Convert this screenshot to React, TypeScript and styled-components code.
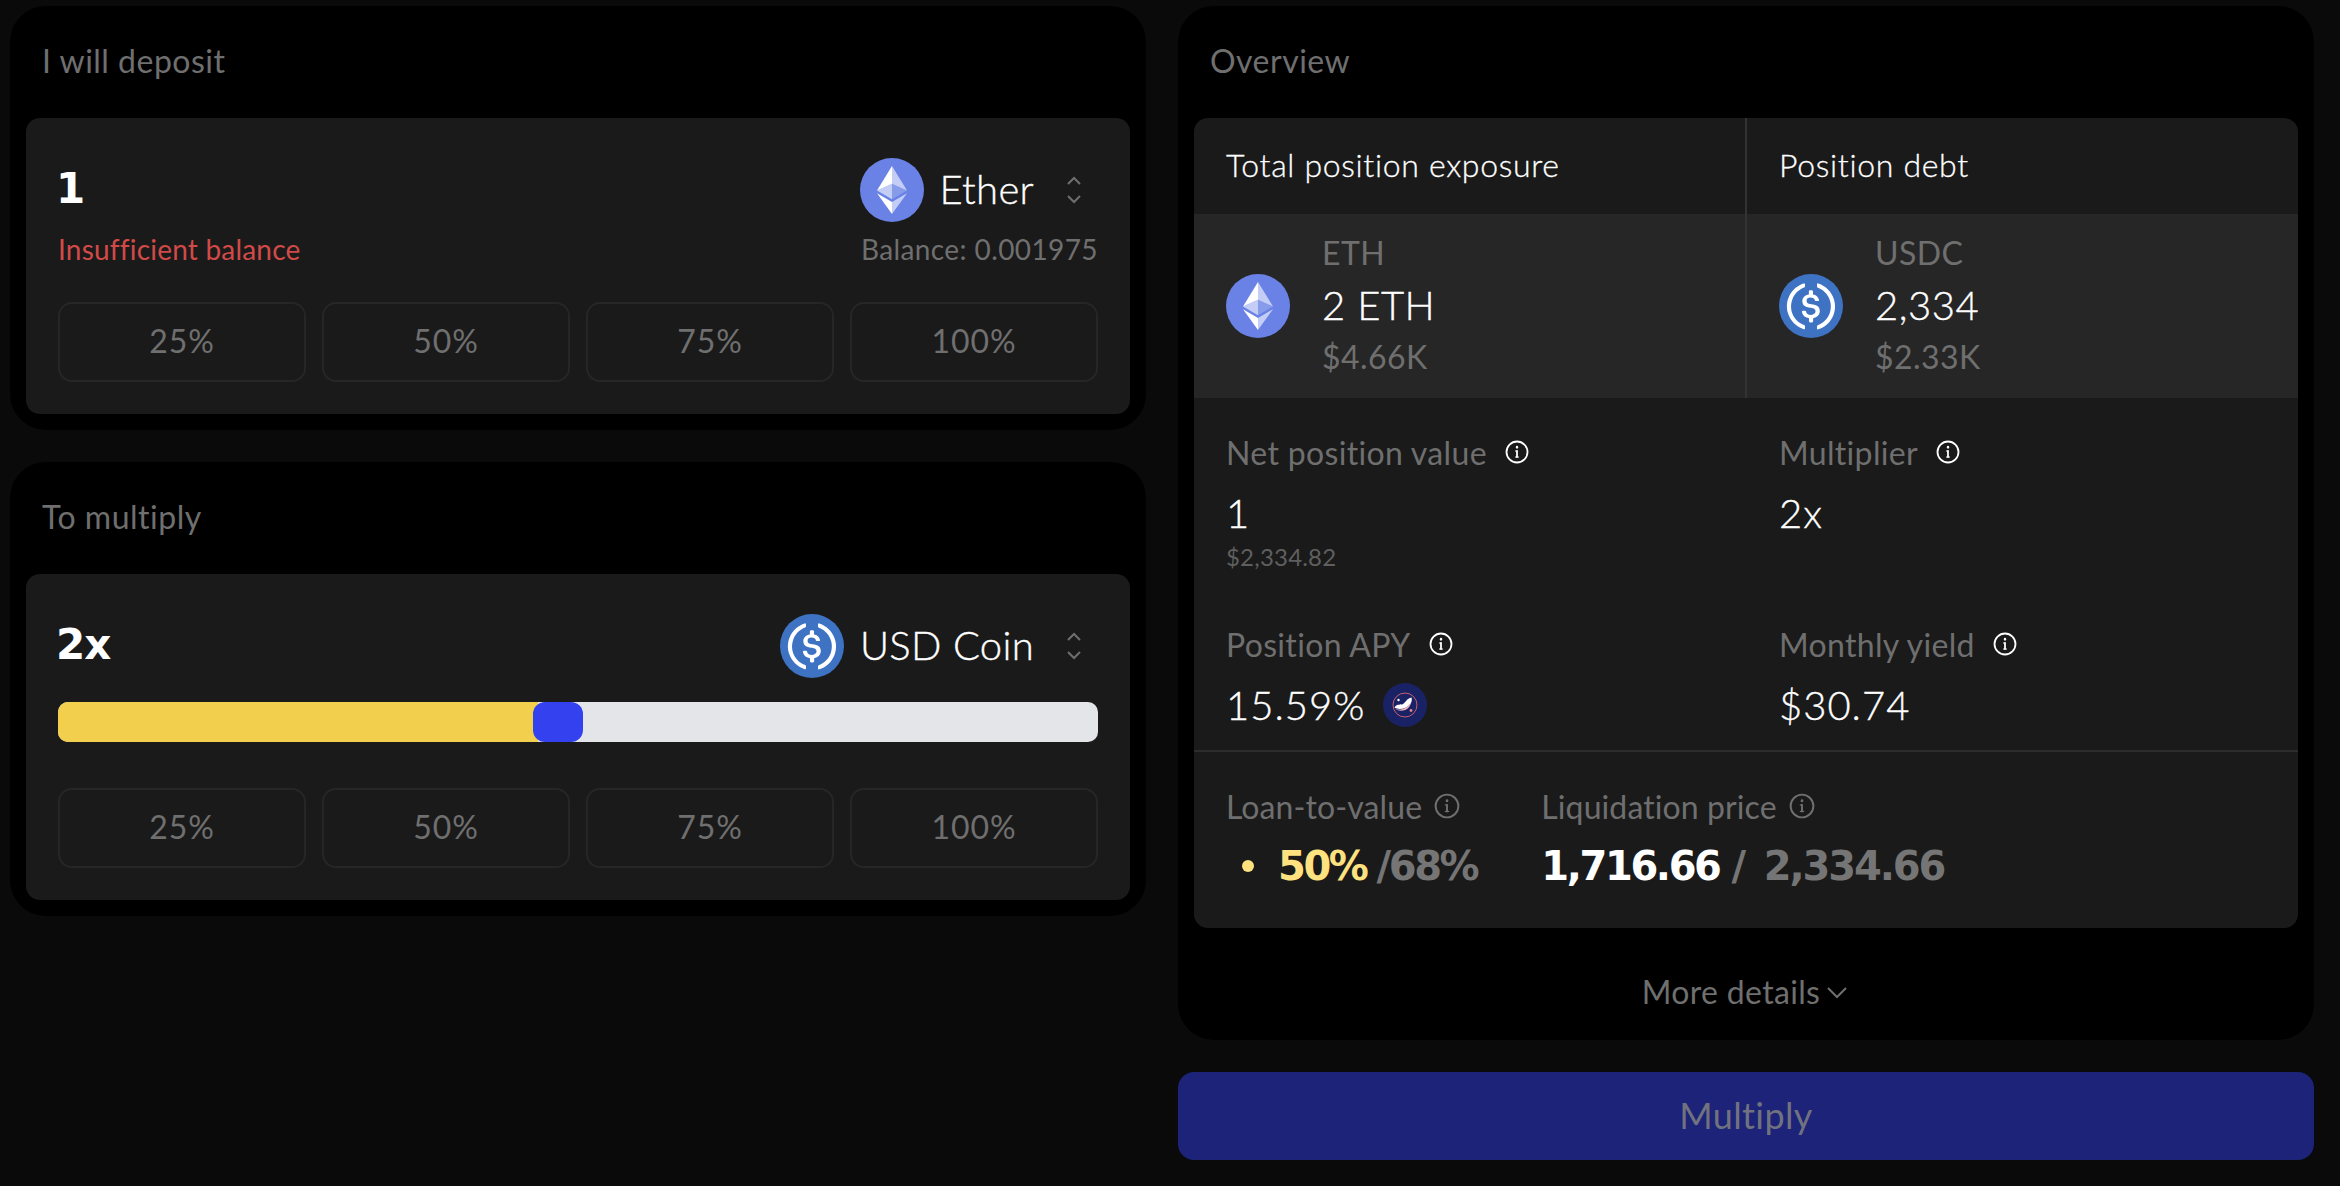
import React from "react";
import styled, { createGlobalStyle } from "styled-components";

const Global = createGlobalStyle`
  html, body { margin: 0; padding: 0; background: #0a0a0a; }
  body { font-family: Lato, "Open Sans", sans-serif; color: #fff; }
  * { box-sizing: border-box; }
`;

const Page = styled.div`
  width: 2340px;
  height: 1186px;
  padding: 6px 26px 0 10px;
  display: grid;
  grid-template-columns: 1136px 1136px;
  column-gap: 32px;
  align-items: start;
  overflow: hidden;
`;
const Column = styled.div`
  display: flex;
  flex-direction: column;
  gap: 32px;
`;
const Panel = styled.section<{ $flush?: boolean }>`
  background: #000;
  border-radius: 36px;
  padding: 0 16px ${(p) => (p.$flush ? 0 : 16)}px;
`;
const PanelTitle = styled.div`
  height: 112px;
  padding: 0 16px 3px;
  display: flex;
  align-items: center;
  font-size: 32px;
  letter-spacing: 0.5px;
  color: #6f6f6f;
`;
const InputCard = styled.div`
  background: #1a1a1a;
  border-radius: 14px;
  padding: 40px 32px 32px;
`;
const TopRow = styled.div`
  display: flex;
  align-items: center;
  justify-content: space-between;
  height: 64px;
`;
const BigValue = styled.div`
  font-family: "DejaVu Sans", sans-serif;
  font-weight: 700;
  font-size: 42px;
  letter-spacing: -1px;
  margin-left: -2px;
  padding-bottom: 3px;
`;
const TokenPick = styled.div`
  display: flex;
  align-items: center;
  font-size: 40px;
  font-weight: 300;
  -webkit-text-stroke: 0.35px #fff;
  padding-right: 16px;
`;
const TokenName = styled.span`
  margin: 0 32px 0 16px;
  padding-bottom: 3px;
  letter-spacing: 0.3px;
`;
const SubRow = styled.div`
  display: flex;
  justify-content: space-between;
  align-items: center;
  height: 36px;
  margin-top: 10px;
  padding-bottom: 3px;
  font-size: 28px;
  letter-spacing: 0.4px;
  color: #6f6f6f;
`;
const ErrorText = styled.span`
  color: #d14a48;
  letter-spacing: 0.2px;
`;
const PctRow = styled.div<{ $top: number }>`
  display: grid;
  grid-template-columns: repeat(4, 1fr);
  gap: 16px;
  margin-top: ${(p) => p.$top}px;
`;
const PctButton = styled.div`
  height: 80px;
  border: 2px solid #262626;
  border-radius: 14px;
  padding-bottom: 3px;
  display: flex;
  align-items: center;
  justify-content: center;
  font-size: 32px;
  letter-spacing: 0.9px;
  color: #6f6f6f;
`;
const Slider = styled.div`
  margin-top: 24px;
  height: 40px;
  background: #e4e5e9;
  border-radius: 10px;
  display: flex;
  overflow: hidden;
`;
const SliderFill = styled.div`
  width: 480px;
  background: #f3cf4e;
`;
const SliderThumb = styled.div`
  width: 50px;
  margin-left: -5px;
  background: #3341ee;
  border-radius: 12px;
`;

const OverviewCard = styled.div`
  background: #1a1a1a;
  border-radius: 14px;
  overflow: hidden;
`;
const TwoCols = styled.div`
  display: grid;
  grid-template-columns: 551px 553px;
`;
const HeadCell = styled.div<{ $right?: boolean }>`
  height: 96px;
  display: flex;
  align-items: center;
  padding: 0 0 3px 32px;
  font-size: 32px;
  font-weight: 300;
  -webkit-text-stroke: 0.3px #fff;
  letter-spacing: 0.68px;
  border-left: ${(p) => (p.$right ? "2px solid #333" : "none")};
`;
const AssetCell = styled.div<{ $right?: boolean }>`
  height: 184px;
  background: #262626;
  display: flex;
  align-items: center;
  gap: 32px;
  padding-left: 32px;
  border-left: ${(p) => (p.$right ? "2px solid #333" : "none")};
`;
const AssetText = styled.div`
  display: flex;
  flex-direction: column;
  margin-top: -3px;
`;
const Muted = styled.div`
  font-size: 32px;
  line-height: 52px;
  letter-spacing: 0.45px;
  color: #6f6f6f;
`;
const AssetValue = styled.div`
  font-size: 40px;
  line-height: 52px;
  font-weight: 300;
  -webkit-text-stroke: 0.35px #fff;
  letter-spacing: 0.55px;
`;
const StatsGrid = styled.div`
  display: grid;
  grid-template-columns: 551px 553px;
  grid-template-rows: 192px 160px;
  border-bottom: 2px solid #2c2c2c;
`;
const Stat = styled.div`
  padding: 34px 0 0 32px;
`;
const StatSecond = styled(Stat)`
  padding-left: 34px;
`;
const StatLabel = styled.div`
  display: flex;
  align-items: center;
  gap: 18px;
  height: 40px;
  font-size: 32px;
  letter-spacing: 0.33px;
  color: #6f6f6f;
`;
const RiskLabel = styled(StatLabel)`
  gap: 12px;
  letter-spacing: 0.1px;
`;
const StatValue = styled.div`
  display: flex;
  align-items: center;
  gap: 18px;
  height: 48px;
  margin-top: 17px;
  font-size: 40px;
  font-weight: 300;
  -webkit-text-stroke: 0.35px #fff;
  letter-spacing: 1px;
`;
const StatSub = styled.div`
  font-size: 24px;
  line-height: 32px;
  margin-top: 4px;
  letter-spacing: 0.2px;
  color: #5f5f5f;
`;
const RiskRow = styled.div`
  height: 176px;
  padding: 34px 0 0 32px;
  display: flex;
  gap: 64px;
`;
const RiskBlock = styled.div`
  display: flex;
  flex-direction: column;
`;
const RiskValue = styled.div`
  display: flex;
  align-items: center;
  height: 48px;
  margin-top: 16px;
  font-family: "DejaVu Sans", sans-serif;
  font-weight: 700;
  font-size: 40px;
  letter-spacing: -2.4px;
  color: #757575;
  white-space: nowrap;
`;
const Dot = styled.span`
  width: 12px;
  height: 12px;
  border-radius: 50%;
  background: #fde27f;
  margin: 0 24px 0 16px;
`;
const Yellow = styled.span`
  color: #fde27f;
  margin-right: 10px;
`;
const White = styled.span`
  color: #fff;
  margin-right: 12px;
`;
const Slash = styled.span`
  margin-right: 20px;
`;
const Limit = styled.span`
  letter-spacing: -2.1px;
`;
const Footer = styled.div`
  height: 112px;
  display: flex;
  align-items: center;
  justify-content: center;
  gap: 4px;
  padding: 18px 0 3px;
  font-size: 32px;
  letter-spacing: 0.33px;
  color: #6f6f6f;
`;
const Submit = styled.div`
  height: 88px;
  background: #1c2378;
  border-radius: 16px;
  padding-bottom: 3px;
  display: flex;
  align-items: center;
  justify-content: center;
  font-size: 36px;
  letter-spacing: 0.4px;
  color: #70727f;
`;

const Eth = ({ size = 64 }: { size?: number }) => (
  <svg width={size} height={size} viewBox="0 0 32 32">
    <circle cx="16" cy="16" r="16" fill="#6a82e6" />
    <g fill="#fff">
      <path fillOpacity=".602" d="M16 4v8.87l7.5 3.35z" />
      <path d="M16 4L8.5 16.22 16 12.87z" />
      <path fillOpacity=".602" d="M16 21.97V28l7.5-10.38z" />
      <path d="M16 28v-6.03L8.5 17.62z" />
      <path fillOpacity=".2" d="M16 20.57l7.5-4.35-7.5-3.35z" />
      <path fillOpacity=".602" d="M8.5 16.22l7.5 4.35v-7.7z" />
    </g>
  </svg>
);
const Usdc = () => (
  <svg width={64} height={64} viewBox="0 0 2000 2000">
    <circle cx="1000" cy="1000" r="1000" fill="#3e73c4" />
    <path fill="#fff" d="M1275 1158.33c0-145.83-87.5-195.83-262.5-216.66-125-16.67-150-50-150-108.34s41.67-95.83 125-95.83c75 0 116.67 25 137.5 87.5 4.17 12.5 16.67 20.83 29.17 20.83h66.66c16.67 0 29.17-12.5 29.17-29.16v-4.17c-16.67-91.67-91.67-162.5-187.5-170.83v-100c0-16.67-12.5-29.17-33.33-33.34h-62.5c-16.67 0-29.17 12.5-33.34 33.34v95.83c-125 16.67-204.16 100-204.16 204.17 0 137.5 83.33 191.66 258.33 212.5 116.67 20.83 154.17 45.83 154.17 112.5s-58.34 112.5-137.5 112.5c-108.34 0-145.84-45.84-158.34-108.34-4.16-16.66-16.66-25-29.16-25h-70.84c-16.66 0-29.16 12.5-29.16 29.17v4.17c16.66 104.16 83.33 179.16 220.83 200v100c0 16.66 12.5 29.16 33.33 33.33h62.5c16.67 0 29.17-12.5 33.34-33.33v-100c125-20.84 208.33-108.34 208.33-220.84z" />
    <path fill="#fff" d="M787.5 1595.83c-325-116.66-491.67-479.16-370.83-800 62.5-175 200-308.33 370.83-370.83 16.67-8.33 25-20.83 25-41.67V325c0-16.67-8.33-29.17-25-33.33-4.17 0-12.5 0-16.67 4.16-395.83 125-612.5 545.84-487.5 941.67 75 233.33 254.17 412.5 487.5 487.5 16.67 8.33 33.34 0 37.5-16.67 4.17-4.16 4.17-8.33 4.17-16.66v-58.34c0-12.5-12.5-29.16-25-37.5zM1229.17 295.83c-16.67-8.33-33.34 0-37.5 16.67-4.17 4.17-4.17 8.33-4.17 16.67v58.33c0 16.67 12.5 33.33 25 41.67 325 116.66 491.67 479.16 370.83 800-62.5 175-200 308.33-370.83 370.83-16.67 8.33-25 20.83-25 41.67V1700c0 16.67 8.33 29.17 25 33.33 4.17 0 12.5 0 16.67-4.16 395.83-125 612.5-545.84 487.5-941.67-75-237.5-258.34-416.67-487.5-491.67z" />
  </svg>
);
const Updown = () => (
  <svg width="16" height="28" viewBox="0 0 16 28" fill="none" stroke="#6f6f6f" strokeWidth="2">
    <path d="M2 8l6-6 6 6M2 20l6 6 6-6" />
  </svg>
);
const Info = ({ color = "#fff", size = 24 }: { color?: string; size?: number }) => (
  <svg width={size} height={size} viewBox="0 0 24 24" fill="none" stroke={color} strokeWidth="1.8" strokeLinecap="round">
    <circle cx="12" cy="12" r="10.5" />
    <path d="M12 11v6" />
    <path d="M12 7v.4" strokeWidth="2.4" />
    <path d="M10.5 11H12M10.5 17h3" strokeWidth="1.2" />
  </svg>
);
const Badge = () => (
  <svg width="44" height="44" viewBox="0 0 44 44">
    <circle cx="22" cy="22" r="22" fill="#1a2266" />
    <circle cx="22" cy="22" r="12" fill="none" stroke="#d9656c" strokeWidth="0.9" />
    <path fill="#fff" d="M11.500 24.500c3-4.500 6-2 8.500-3.500 3-1.800 3.500-5.500 8.500-6.500 1.500 4-2 9-6.500 10.500-3.500 1.200-7.500 1.500-10.500-.5z" />
    <path fill="#f0b5c0" d="M12.500 26c3.500 1 7 .6 10-1.200 2.400-1.400 4.500-3.300 5.800-5.800-1 5-4.300 8-8.300 8.600-2.800.4-5.800-.1-7.500-1.600z" />
    <circle cx="15.500" cy="17" r="1.200" fill="#fff" />
    <circle cx="28" cy="27.500" r="1.400" fill="#e8828c" />
  </svg>
);
const Down = () => (
  <svg width="26" height="26" viewBox="0 0 26 26" fill="none" stroke="#6f6f6f" strokeWidth="2">
    <path d="M4 9l9 9 9-9" />
  </svg>
);

const Percents = ({ top }: { top: number }) => (
  <PctRow $top={top}>
    {["25%", "50%", "75%", "100%"].map((p) => (
      <PctButton key={p}>{p}</PctButton>
    ))}
  </PctRow>
);

export default function App() {
  return (
    <Page>
      <Global />
      <Column>
        <Panel>
          <PanelTitle>I will deposit</PanelTitle>
          <InputCard>
            <TopRow>
              <BigValue>1</BigValue>
              <TokenPick>
                <Eth />
                <TokenName>Ether</TokenName>
                <Updown />
              </TokenPick>
            </TopRow>
            <SubRow>
              <ErrorText>Insufficient balance</ErrorText>
              <span>Balance: 0.001975</span>
            </SubRow>
            <Percents top={34} />
          </InputCard>
        </Panel>
        <Panel>
          <PanelTitle>To multiply</PanelTitle>
          <InputCard>
            <TopRow>
              <BigValue>2x</BigValue>
              <TokenPick>
                <Usdc />
                <TokenName>USD Coin</TokenName>
                <Updown />
              </TokenPick>
            </TopRow>
            <Slider>
              <SliderFill />
              <SliderThumb />
            </Slider>
            <Percents top={46} />
          </InputCard>
        </Panel>
      </Column>
      <Column>
        <Panel $flush>
          <PanelTitle>Overview</PanelTitle>
          <OverviewCard>
            <TwoCols>
              <HeadCell>Total position exposure</HeadCell>
              <HeadCell $right>Position debt</HeadCell>
              <AssetCell>
                <Eth />
                <AssetText>
                  <Muted>ETH</Muted>
                  <AssetValue>2 ETH</AssetValue>
                  <Muted>$4.66K</Muted>
                </AssetText>
              </AssetCell>
              <AssetCell $right>
                <Usdc />
                <AssetText>
                  <Muted>USDC</Muted>
                  <AssetValue>2,334</AssetValue>
                  <Muted>$2.33K</Muted>
                </AssetText>
              </AssetCell>
            </TwoCols>
            <StatsGrid>
              <Stat>
                <StatLabel>Net position value <Info /></StatLabel>
                <StatValue>1</StatValue>
                <StatSub>$2,334.82</StatSub>
              </Stat>
              <StatSecond>
                <StatLabel>Multiplier <Info /></StatLabel>
                <StatValue>2x</StatValue>
              </StatSecond>
              <Stat>
                <StatLabel>Position APY <Info /></StatLabel>
                <StatValue>15.59% <Badge /></StatValue>
              </Stat>
              <StatSecond>
                <StatLabel>Monthly yield <Info /></StatLabel>
                <StatValue>$30.74</StatValue>
              </StatSecond>
            </StatsGrid>
            <RiskRow>
              <RiskBlock>
                <RiskLabel>Loan-to-value <Info color="#6f6f6f" size={26} /></RiskLabel>
                <RiskValue>
                  <Dot />
                  <Yellow>50%</Yellow>
                  <span>/68%</span>
                </RiskValue>
              </RiskBlock>
              <RiskBlock>
                <RiskLabel>Liquidation price <Info color="#6f6f6f" size={26} /></RiskLabel>
                <RiskValue>
                  <White>1,716.66</White>
                  <Slash>/</Slash>
                  <Limit>2,334.66</Limit>
                </RiskValue>
              </RiskBlock>
            </RiskRow>
          </OverviewCard>
          <Footer>More details <Down /></Footer>
        </Panel>
        <Submit>Multiply</Submit>
      </Column>
    </Page>
  );
}
